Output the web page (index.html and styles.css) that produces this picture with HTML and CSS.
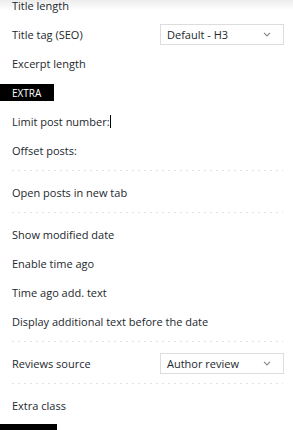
FILE: index.html
```html
<!DOCTYPE html>
<html>
<head>
<meta charset="utf-8">
<link rel="stylesheet" href="styles.css">
</head>
<body>
<div class="panel">
  <div class="row"><span class="label">Title length</span></div>
  <div class="row">
    <span class="label">Title tag (SEO)</span>
    <div class="select"><span>Default - H3</span><svg class="chev" width="8" height="5" viewBox="0 0 8 5"><path d="M1 0.8 L4 3.8 L7 0.8" fill="none" stroke="#888" stroke-width="1.2"/></svg></div>
  </div>
  <div class="row"><span class="label">Excerpt length</span></div>
  <div class="section"><span>EXTRA</span></div>
  <div class="row"><span class="label">Limit post number:</span><span class="cursor"></span></div>
  <div class="row"><span class="label">Offset posts:</span></div>
  <div class="sep"></div>
  <div class="row"><span class="label">Open posts in new tab</span></div>
  <div class="sep"></div>
  <div class="row"><span class="label">Show modified date</span></div>
  <div class="row"><span class="label">Enable time ago</span></div>
  <div class="row"><span class="label">Time ago add. text</span></div>
  <div class="row"><span class="label">Display additional text before the date</span></div>
  <div class="sep"></div>
  <div class="row">
    <span class="label">Reviews source</span>
    <div class="select"><span>Author review</span><svg class="chev" width="8" height="5" viewBox="0 0 8 5"><path d="M1 0.8 L4 3.8 L7 0.8" fill="none" stroke="#888" stroke-width="1.2"/></svg></div>
  </div>
  <div class="sep"></div>
  <div class="row"><span class="label">Extra class</span></div>
  <div class="bottom-bar"></div>
</div>
</body>
</html>
```
FILE: styles.css
```css
html, body {
  margin: 0;
  padding: 0;
}
body {
  font-family: "Open Sans", "Noto Sans", sans-serif;
  font-size: 11px;
  color: #23282d;
  width: 293px;
  height: 430px;
  overflow: hidden;
  background: linear-gradient(#ececec, #ffffff 10px) no-repeat, #fff;
}
.panel {
  display: flex;
  flex-direction: column;
  margin-top: -9px;
  padding: 0 10px 0 12px;
}
.row {
  height: 29px;
  display: flex;
  align-items: center;
  justify-content: space-between;
}
.row .label {
  line-height: 14px;
}
.cursor {
  display: inline-block;
  width: 1px;
  height: 13px;
  background: #000;
  margin-right: auto;
}
.select {
  width: 110px;
  height: 19px;
  border: 1px solid #ddd;
  display: flex;
  align-items: center;
  justify-content: space-between;
  padding: 0 12px 0 0;
  margin-right: -1px;
  background: #fff;
}
.select span {
  padding-left: 6px;
  color: #23282d;
}
.chev {
  display: block;
}
.section {
  margin: 6px 0 6px -12px;
  width: 54px;
  height: 17px;
  background: #000;
  color: #fff;
  font-size: 10px;
  display: flex;
  align-items: center;
}
.section span {
  padding-left: 12px;
}
.sep {
  height: 13px;
  background-image: repeating-linear-gradient(to right, #e2e2e2 0 2px, transparent 2px 6px);
  background-size: 100% 1px;
  background-repeat: no-repeat;
  background-position: 0 5px;
}
.bottom-bar {
  margin: 4px 0 0 -12px;
  width: 57px;
  height: 6px;
  background: #000;
}
```
